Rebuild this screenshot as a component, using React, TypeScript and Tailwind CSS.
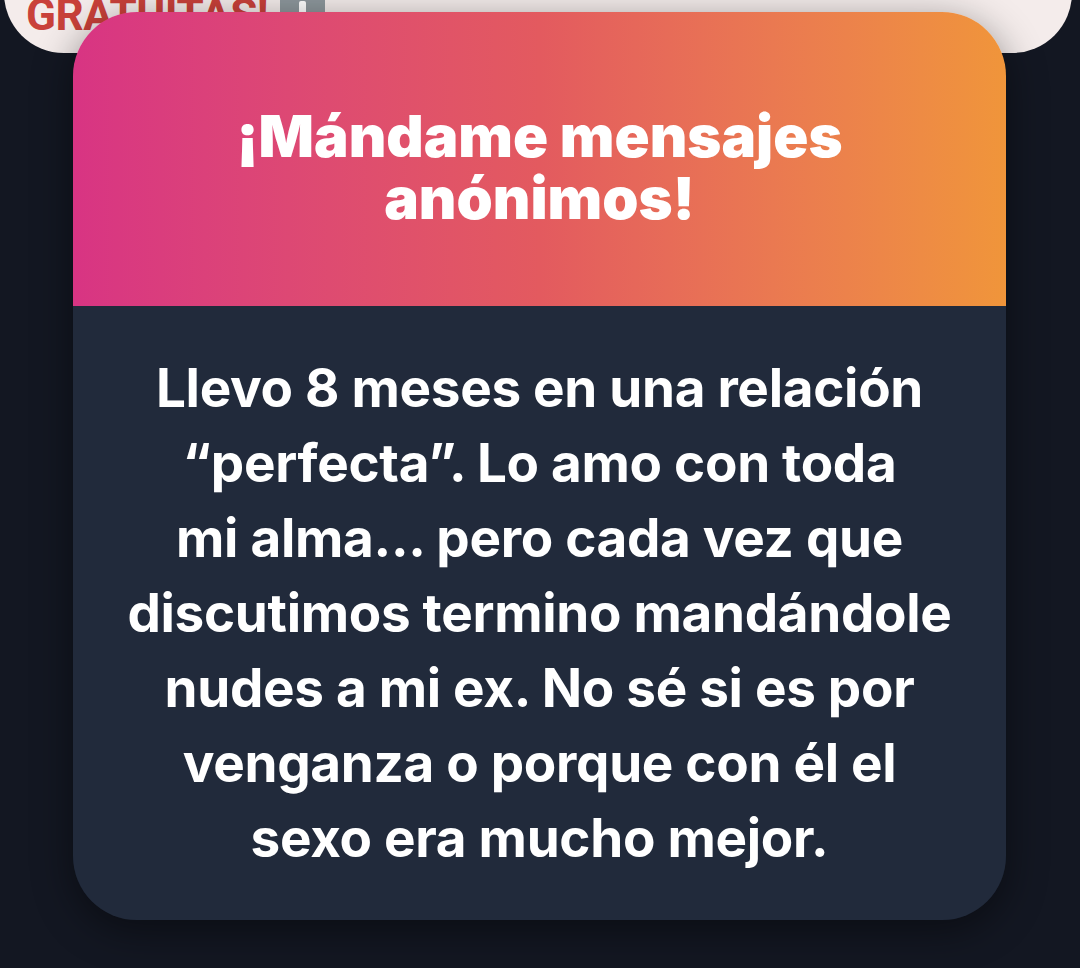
export default function App() {
  const lines = [
    "Llevo 8 meses en una relación",
    "“perfecta”. Lo amo con toda",
    "mi alma... pero cada vez que",
    "discutimos termino mandándole",
    "nudes a mi ex. No sé si es por",
    "venganza o porque con él el",
    "sexo era mucho mejor.",
  ];

  return (
    <div className="min-h-[968px] w-[1080px] overflow-hidden bg-[#131722] font-['Inter',sans-serif]">
      {/* previous card peeking from above */}
      <div className="-mt-[30px] ml-[4px] mr-[8px] flex h-[83px] items-start rounded-b-[60px] bg-[#f4eceb] pl-[22px] pt-[23px]">
        <span className="font-['Roboto',sans-serif] text-[44px] font-bold leading-[44px] tracking-[-0.5px] text-[#c9413a]">
          GRATUITAS!
        </span>
        <span className="-mt-[23px] ml-[12px] flex h-[48px] w-[45px] justify-center rounded-[6px] bg-[#8d979c]">
          <span className="mt-[31px] h-[14px] w-[7px] rounded-[2px] bg-white" />
        </span>
      </div>

      {/* anonymous message card */}
      <div className="relative -mt-[41px] ml-[73px] w-[933px] overflow-hidden rounded-[64px] shadow-[0_10px_40px_rgba(0,0,0,0.45)]">
        <div className="flex h-[294px] items-center justify-center bg-linear-to-r from-[#d83483] via-[#e35a5f] to-[#f0953a] pt-[16px]">
          <h1 className="text-center text-[58px] font-black leading-[62px] tracking-[0px] text-white">
            ¡Mándame mensajes
            <br />
            anónimos!
          </h1>
        </div>
        <div className="flex h-[614px] items-center justify-center bg-[#212a3b]">
          <p className="text-center text-[53px] font-bold leading-[75px] tracking-[-0.3px] text-white">
            {lines.map((l, i) => (
              <span key={i} className="block">
                {l}
              </span>
            ))}
          </p>
        </div>
      </div>
    </div>
  );
}
